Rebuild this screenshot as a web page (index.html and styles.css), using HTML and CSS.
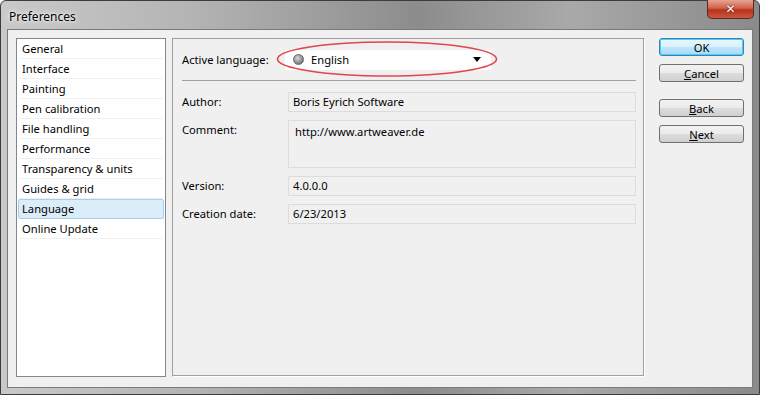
FILE: index.html
```html
<html>

<head>
    <link rel="stylesheet" href="styles.css">
</head>

<body>
    <div id="window">
        <div id="titlebar">
            <span id="title">Preferences</span>
            <div id="close">&#x2715;</div>
        </div>
        <div id="client">
            <ul id="pages">
                <li>General</li>
                <li>Interface</li>
                <li>Painting</li>
                <li>Pen calibration</li>
                <li>File handling</li>
                <li>Performance</li>
                <li>Transparency &amp; units</li>
                <li>Guides &amp; grid</li>
                <li class="selected">Language</li>
                <li>Online Update</li>
            </ul>

            <div id="panel">
                <div class="lang-row">
                    <label class="lbl">Active language:</label>
                    <div class="combo-wrap">
                        <div class="combo">
                            <span class="globe"></span>
                            <span class="combo-text">English</span>
                            <svg class="arrow" width="8" height="5" viewBox="0 0 8 5"><path d="M0 0H8L4 5Z" fill="#000" /></svg>
                        </div>
                        <svg class="ring" width="222" height="38" viewBox="0 0 222 38"><ellipse cx="111" cy="19" rx="109.5" ry="17" fill="none" stroke="#e0464b" stroke-width="1.6" /></svg>
                    </div>
                </div>
                <hr class="sep">
                <div class="field-row">
                    <label class="lbl">Author:</label>
                    <div class="field">Boris Eyrich Software</div>
                </div>
                <div class="field-row">
                    <label class="lbl">Comment:</label>
                    <div class="field tall">http://www.artweaver.de</div>
                </div>
                <div class="field-row">
                    <label class="lbl">Version:</label>
                    <div class="field">4.0.0.0</div>
                </div>
                <div class="field-row">
                    <label class="lbl">Creation date:</label>
                    <div class="field">6/23/2013</div>
                </div>
            </div>

            <div id="buttons">
                <button class="btn default">OK</button>
                <button class="btn"><u>C</u>ancel</button>
                <button class="btn spaced"><u>B</u>ack</button>
                <button class="btn"><u>N</u>ext</button>
            </div>
        </div>
    </div>
</body>

</html>
```

FILE: styles.css
```css
body {
    margin: 0;
    font-family: "Noto Sans", "DejaVu Sans", sans-serif;
    font-size: 11.2px;
    color: #000;
}

#window {
    width: 760px;
    height: 395px;
    box-sizing: border-box;
    border: 1px solid #3c3c3c;
    border-radius: 6px 6px 0 0;
    background: linear-gradient(90deg, #c9c9c9 0%, #b4b4b4 25%, #8c8c8c 55%, #a9a9a9 75%, #8a8a8a 100%);
    padding: 0 6px 6px 6px;
    display: flex;
    flex-direction: column;
}

#titlebar {
    height: 28px;
    display: flex;
    align-items: flex-start;
    justify-content: space-between;
}

#title {
    margin-top: 7px;
    margin-left: 2px;
    font-size: 12px;
    color: #000;
    text-shadow: 0 0 6px #fff, 0 0 3px #fff;
}

#close {
    width: 47px;
    height: 19px;
    margin-top: -1px;
    margin-right: -1px;
    box-sizing: border-box;
    border: 1px solid #5a2a22;
    border-top: none;
    border-radius: 0 0 5px 5px;
    background: linear-gradient(180deg, #e7a592 0%, #d0624a 45%, #b8321c 55%, #c9573f 100%);
    color: #fff;
    font-size: 12px;
    font-weight: bold;
    text-align: center;
    line-height: 18px;
    text-shadow: 0 0 2px #400;
}

#client {
    flex: 1;
    background: #f0f0f0;
    border: 1px solid #7a7a7a;
    display: flex;
    padding: 8px 8px 10px 8px;
    gap: 6px;
}

#pages {
    list-style: none;
    margin: 0;
    padding: 0 1px;
    width: 146px;
    flex: none;
    background: #fff;
    border: 1px solid #828790;
}

#pages li {
    height: 18px;
    line-height: 18px;
    padding-left: 3px;
    border: 1px solid transparent;
    border-bottom-color: #f0f0f0;
    border-radius: 2px;
}

#pages li.selected {
    background: #dcedfa;
    border-color: #a7d0ee;
}

#panel {
    width: 473px;
    flex: none;
    box-sizing: border-box;
    border: 1px solid #a0a0a0;
    border-right-color: #fff;
    border-bottom-color: #fff;
    box-shadow: inset -1px -1px 0 #a0a0a0;
    padding: 0 8px 0 9px;
}

.lang-row {
    display: flex;
    align-items: center;
    height: 41px;
}

.lbl {
    width: 106px;
    flex: none;
}

.lang-row .lbl {
    width: 103px;
}

.combo-wrap {
    position: relative;
}

.combo {
    width: 206px;
    height: 20px;
    box-sizing: border-box;
    background: #fff;
    display: flex;
    align-items: center;
    padding: 0 10px 0 8px;
}

.globe {
    width: 11px;
    height: 11px;
    border-radius: 50%;
    background: radial-gradient(circle at 40% 35%, #d8d8d8 0%, #8a8a8a 60%, #555 100%);
    border: 1px solid #666;
    box-sizing: border-box;
}

.combo-text {
    margin-left: 7px;
    flex: 1;
}

.ring {
    position: absolute;
    left: -9px;
    top: -10px;
}

.sep {
    border: none;
    border-top: 1px solid #a0a0a0;
    margin: 0 0 11px 0;
}

.field-row {
    display: flex;
    align-items: flex-start;
    margin-bottom: 8px;
}

.field-row .lbl {
    line-height: 19px;
}

.field {
    flex: 1;
    height: 20px;
    line-height: 18px;
    box-sizing: border-box;
    border: 1px solid #dcdcdc;
    background: #f0f0f0;
    padding-left: 4px;
}

.field.tall {
    height: 48px;
    padding-left: 6px;
    padding-top: 2px;
}

#buttons {
    margin-left: 8px;
    display: flex;
    flex-direction: column;
    width: 85px;
    flex: none;
}

.btn {
    height: 18px;
    margin-bottom: 8px;
    font-family: inherit;
    font-size: 11.2px;
    padding: 0;
    border: 1px solid #707070;
    border-radius: 3px;
    background: linear-gradient(180deg, #f2f2f2 0%, #ebebeb 50%, #dddddd 51%, #cfcfcf 100%);
    color: #000;
    line-height: 15px;
}

.btn.default {
    border-color: #3c7fb1;
    box-shadow: inset 0 0 0 1px #48d1f7;
    background: linear-gradient(180deg, #eaf6fd 0%, #d9f0fc 50%, #bee6fd 51%, #a7d9f5 100%);
}

.btn.spaced {
    margin-top: 9px;
}

.btn u {
    text-decoration: underline;
}
```
